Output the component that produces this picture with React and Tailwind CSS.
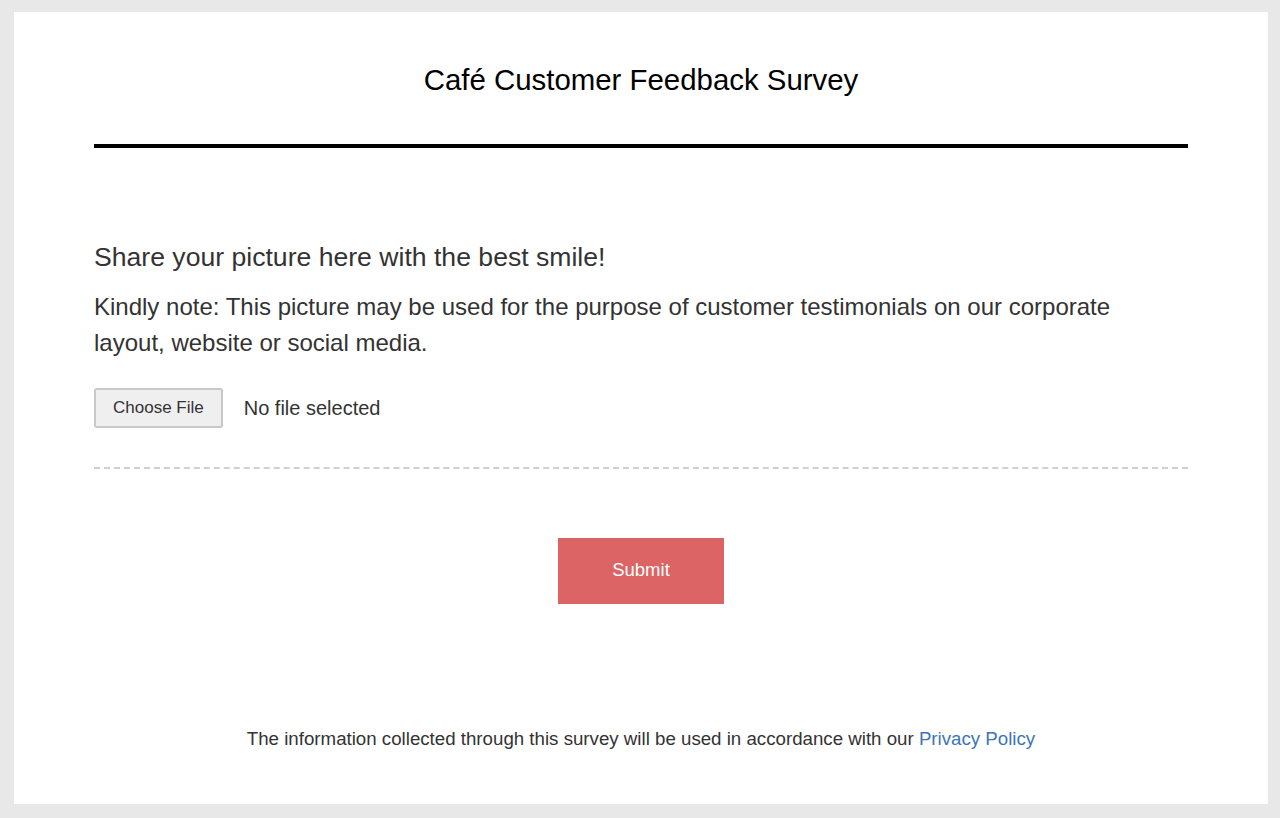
import { useState } from 'react'

function App() {
    const [fileName, setFileName] = useState('')

    return (
        <div className='min-h-screen bg-[#e8e8e8] pt-[12px] pl-[14px] pr-[12px] pb-[14px]' style={{ fontFamily: '"Liberation Sans", Arial, sans-serif' }}>
            <div className='bg-white px-[80px] pb-[53px]'>
                {/* cabeçalho */}
                <div className='h-[136px] border-b-4 border-black flex items-start justify-center pt-[48px]'>
                    <h1 className='text-[29.4px] leading-[40px] text-black'>Café Customer Feedback Survey</h1>
                </div>

                {/* pergunta da foto */}
                <div className='pt-[92px] pb-[39px] border-b-2 border-dashed border-[#d0d0d0]'>
                    <h2 className='text-[26.6px] leading-[34px] text-[#333]'>Share your picture here with the best smile!</h2>
                    <p className='mt-[15px] text-[24px] leading-[36px] text-[#333] pr-[60px]'>
                        Kindly note: This picture may be used for the purpose of customer testimonials on our corporate layout, website or social media.
                    </p>
                    <div className='mt-[27px] flex items-center'>
                        <label className='h-[40px] px-[17px] flex items-center bg-[#efefef] border-2 border-[#c8c8c8] rounded-[3px] text-[17px] text-[#333] cursor-pointer'>
                            Choose File
                            <input type='file' className='hidden' onChange={(e) => setFileName(e.target.files[0]?.name || '')} />
                        </label>
                        <span className='ml-[21px] text-[20px] text-[#333]'>{fileName || 'No file selected'}</span>
                    </div>
                </div>

                {/* enviar */}
                <div className='flex justify-center pt-[69px]'>
                    <button className='w-[166px] h-[66px] bg-[#dc6464] text-white text-[18.5px] leading-[24px] pb-[2px]'>Submit</button>
                </div>

                <p className='mt-[123px] text-center text-[18.7px] leading-[24px] text-[#333]'>
                    The information collected through this survey will be used in accordance with our <a href='#' className='text-[#3d75b8]'>Privacy Policy</a>
                </p>
            </div>
        </div>
    )
}

export default App
